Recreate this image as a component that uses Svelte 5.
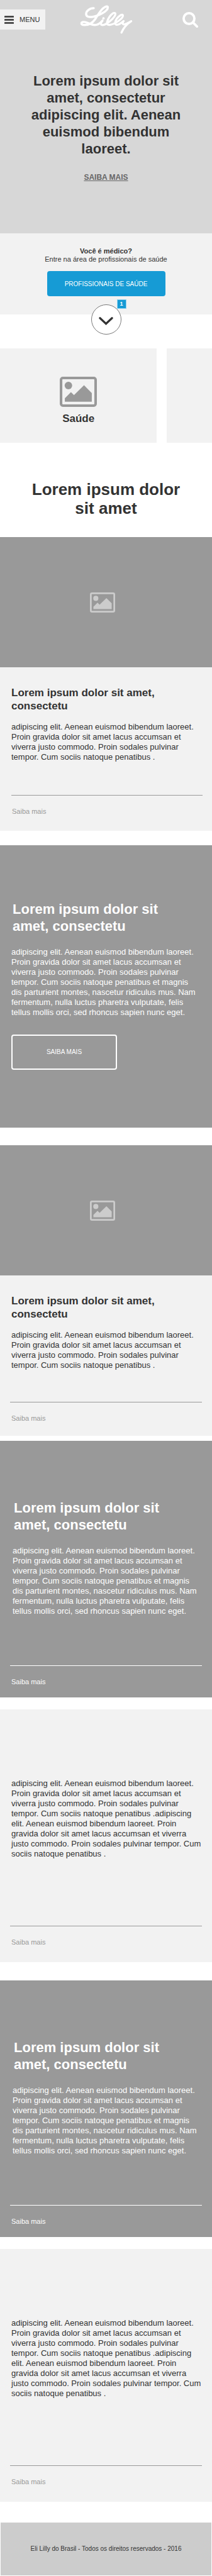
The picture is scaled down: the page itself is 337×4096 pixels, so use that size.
<script>
  const intro = 'adipiscing elit. Aenean euismod bibendum laoreet. Proin gravida dolor sit amet lacus accumsan et viverra justo commodo. Proin sodales pulvinar tempor. Cum sociis natoque penatibus';
  const short = intro + ' .';
  const double = short + short;
  const long = intro + ' et magnis dis parturient montes, nascetur ridiculus mus. Nam fermentum, nulla luctus pharetra vulputate, felis tellus mollis orci, sed rhoncus sapien nunc eget.';
  const title = 'Lorem ipsum dolor sit amet, consectetu';
</script>

{#snippet picture(kind)}
  <svg class="picture {kind}" viewBox="0 0 73 59" preserveAspectRatio="none" aria-hidden="true">
    <rect x="2.5" y="2.5" width="68" height="54" rx="3.5" fill="none" stroke="currentColor" stroke-width="5" />
    <circle cx="17" cy="17.3" r="7.4" fill="currentColor" />
    <path d="M10 49V42L22 30L28 36L47.7 16.5L63 32V49Z" fill="currentColor" />
  </svg>
{/snippet}

{#snippet more()}
  <hr />
  <a class="more" href="#saiba-mais">Saiba mais</a>
{/snippet}

<div class="page">
  <section class="hero">
    <header>
      <button class="menu" type="button">
        <svg viewBox="0 0 19 16" width="15" height="13" aria-hidden="true">
          <rect width="19" height="3.4" rx="0.8" />
          <rect y="6.3" width="19" height="3.4" rx="0.8" />
          <rect y="12.6" width="19" height="3.4" rx="0.8" />
        </svg>
        <span>MENU</span>
      </button>
      <a class="logo" href="#inicio" aria-label="Lilly">
        <svg viewBox="24 31 314 172" width="84" height="46" fill="none" stroke="#fff" stroke-width="12" stroke-linecap="round" stroke-linejoin="round" aria-hidden="true">
          <path stroke-width="13" d="M106 50C82 50 61 66 61 84C61 98 74 104 94 102C135 98 190 66 190 46C190 38 182 38 174 42C148 55 134 86 114 116C98 139 78 150 52 150C38 150 32 146 33 139C34 132 48 129 62 134C84 141 94 150 112 150C132 150 146 138 158 124" />
          <path d="M158 124C148 136 144 150 158 150C184 150 235 102 235 84C235 76 226 76 218 82C202 94 190 118 186 130C182 143 188 150 200 149C230 146 280 112 280 94C280 86 270 88 262 94C248 104 236 122 234 134C232 146 238 150 248 148C262 145 274 134 284 126C276 136 276 148 288 146C304 143 318 132 329 127C306 142 282 170 271 195" />
          <circle cx="164" cy="110" r="7" fill="#fff" stroke="none" />
        </svg>
      </a>
      <button class="search" type="button" aria-label="Buscar">
        <svg viewBox="0 0 31 31" width="25" height="25" fill="none" stroke="#fff" aria-hidden="true">
          <circle cx="13" cy="13" r="10.6" stroke-width="4.8" />
          <path d="M21 21L28.7 28.7" stroke-width="4.6" stroke-linecap="round" />
        </svg>
      </button>
    </header>
    <h1>Lorem ipsum dolor sit amet, consectetur adipiscing elit. Aenean euismod bibendum laoreet.</h1>
    <a class="hero-link" href="#saiba-mais">SAIBA MAIS</a>
  </section>

  <section class="doctor">
    <strong>Você é médico?</strong>
    <span>Entre na área de profissionais de saúde</span>
    <button class="primary" type="button">PROFISSIONAIS DE SAÚDE</button>
    <div class="scroll">
      <button class="circle" type="button" aria-label="Ver mais">
        <svg viewBox="0 0 28 16" width="23" height="13" fill="none" stroke="#333" stroke-width="4" stroke-linecap="round" aria-hidden="true">
          <path d="M2.2 2.2L14 13.2L25.8 2.2" stroke-linejoin="miter" />
        </svg>
      </button>
      <span class="badge">1</span>
    </div>
  </section>

  <section class="carousel">
    <article class="slide">
      {@render picture('large')}
      <h3>Saúde</h3>
    </article>
    <article class="slide"></article>
  </section>

  <h2 class="section-title">Lorem ipsum dolor sit amet</h2>

  <main>
    <article class="card light first">
      <div class="cover">{@render picture('small')}</div>
      <div class="body">
        <h3>{title}</h3>
        <p>{short}</p>
        {@render more()}
      </div>
    </article>

    <article class="card dark feature">
      <h2>{title}</h2>
      <p>{long}</p>
      <button class="outline" type="button">SAIBA MAIS</button>
    </article>

    <article class="card light second">
      <div class="cover">{@render picture('small')}</div>
      <div class="body">
        <h3>{title}</h3>
        <p>{short}</p>
        {@render more()}
      </div>
    </article>

    <article class="card dark linked">
      <h2>{title}</h2>
      <p>{long}</p>
      {@render more()}
    </article>

    <article class="card light plain">
      <p>{double}</p>
      {@render more()}
    </article>

    <article class="card dark linked">
      <h2>{title}</h2>
      <p>{long}</p>
      {@render more()}
    </article>

    <article class="card light plain">
      <p>{double}</p>
      {@render more()}
    </article>
  </main>

  <footer>Eli Lilly do Brasil - Todos os direitos reservados - 2016</footer>
</div>

<style>
  :global(body) {
    background: #fff;
  }

  .page {
    overflow: hidden;
    font-family: "Liberation Sans", Arial, sans-serif;
    font-size: 13px;
    line-height: 16px;
    color: #333;
  }

  h1, h2, h3, p {
    margin: 0;
  }

  button {
    font: inherit;
    color: inherit;
    border: 0;
    padding: 0;
    background: none;
    cursor: pointer;
  }

  svg {
    display: block;
  }

  .hero {
    display: flex;
    flex-direction: column;
    align-items: center;
    padding: 8px 0 81px;
    background: #d7d7d7;
  }

  header {
    align-self: stretch;
    display: grid;
    grid-template-columns: 1fr auto 1fr;
    align-items: center;
  }

  .menu {
    justify-self: start;
    display: flex;
    align-items: center;
    gap: 9px;
    width: 72px;
    height: 32px;
    padding-left: 7px;
    background: #f2f2f2;
    font-size: 11px;
    fill: #333;
  }

  .search {
    justify-self: end;
    margin-right: 22px;
  }

  h1 {
    margin-top: 61px;
    padding: 0 40px;
    font-size: 22px;
    line-height: 27px;
    text-align: center;
  }

  .hero-link {
    margin-top: 24px;
    font-size: 12px;
    font-weight: 700;
    color: #666;
  }

  .doctor {
    display: flex;
    flex-direction: column;
    align-items: center;
    padding-top: 22px;
    background: #f2f2f2;
    font-size: 11px;
    line-height: 13px;
  }

  .primary {
    width: 188px;
    height: 40px;
    margin-top: 12px;
    border-radius: 4px;
    background: #169bd5;
    color: #fff;
    font-size: 10px;
  }

  .scroll {
    position: relative;
    margin: 13px 0 -32px;
  }

  .circle {
    display: grid;
    place-items: center;
    width: 48px;
    height: 48px;
    padding-top: 4px;
    border: 1px solid #797979;
    border-radius: 50%;
    background: #fff;
  }

  .badge {
    position: absolute;
    top: -8px;
    left: 41px;
    box-sizing: border-box;
    width: 15px;
    height: 15px;
    border: 1px solid #8fd3f2;
    background: #169bd5;
    color: #fff;
    font-size: 9px;
    font-weight: 700;
    text-align: center;
  }

  .carousel {
    display: flex;
    gap: 16px;
    margin-top: 54px;
  }

  .slide {
    flex: 0 0 74%;
    box-sizing: border-box;
    display: flex;
    flex-direction: column;
    align-items: center;
    gap: 8px;
    padding: 45px 0 28px;
    background: #f2f2f2;
  }

  .large {
    width: 59px;
    height: 48px;
    color: #999;
  }

  .small {
    width: 40px;
    height: 32px;
    color: #ccc;
  }

  h3 {
    font-size: 17px;
    line-height: 21px;
  }

  .section-title {
    padding: 59px 40px 31px;
    font-size: 26px;
    line-height: 30px;
    text-align: center;
  }

  .cover {
    display: flex;
    justify-content: center;
    padding: 88px 11px 87px 0;
    background: #999;
  }

  .light {
    background: #f2f2f2;
    color: #333;
  }

  .dark {
    background: #999;
    color: #fff;
  }

  .body {
    padding: 30px 10px 0 18px;
  }

  .body p {
    margin-top: 15px;
  }

  hr {
    height: 1px;
    margin: 0 6px 17px -2px;
    border: 0;
    background: #999;
  }

  .more {
    display: block;
    font-size: 11px;
    color: #999;
    text-decoration: none;
  }

  .first {
    margin-bottom: 23px;
    padding-bottom: 23px;
  }

  .first hr {
    margin: 52px 5px 17px 0;
  }

  .first .more {
    padding-left: 1px;
  }

  .dark h2 {
    padding: 0 50px 0 2px;
    margin-bottom: 20px;
    font-size: 22px;
    line-height: 27px;
  }

  .feature {
    margin-bottom: 28px;
    padding: 88px 20px 92px 18px;
  }

  .outline {
    display: block;
    width: 168px;
    height: 56px;
    margin-top: 27px;
    border: 2px solid #fff;
    border-radius: 4px;
    font-size: 10px;
  }

  .second {
    margin-bottom: 8px;
    padding-bottom: 20px;
  }

  .second hr {
    margin-top: 50px;
  }

  .linked {
    margin-bottom: 19px;
    padding: 93px 10px 17px 18px;
  }

  .linked h2 {
    padding-left: 4px;
  }

  .linked p {
    padding: 0 8px 0 2px;
  }

  .linked hr {
    margin-top: 78px;
    background: #fff;
  }

  .linked .more {
    color: #fff;
  }

  .plain {
    margin-bottom: 29px;
    padding: 110px 10px 24px 18px;
  }

  .plain p {
    padding-right: 4px;
  }

  .plain hr {
    margin-top: 106px;
  }

  .plain:last-child {
    margin-bottom: 33px;
  }

  footer {
    margin: 0 1px 1px;
    padding: 34px 8px;
    background: #ccc;
    font-size: 10px;
    text-align: center;
  }
</style>
